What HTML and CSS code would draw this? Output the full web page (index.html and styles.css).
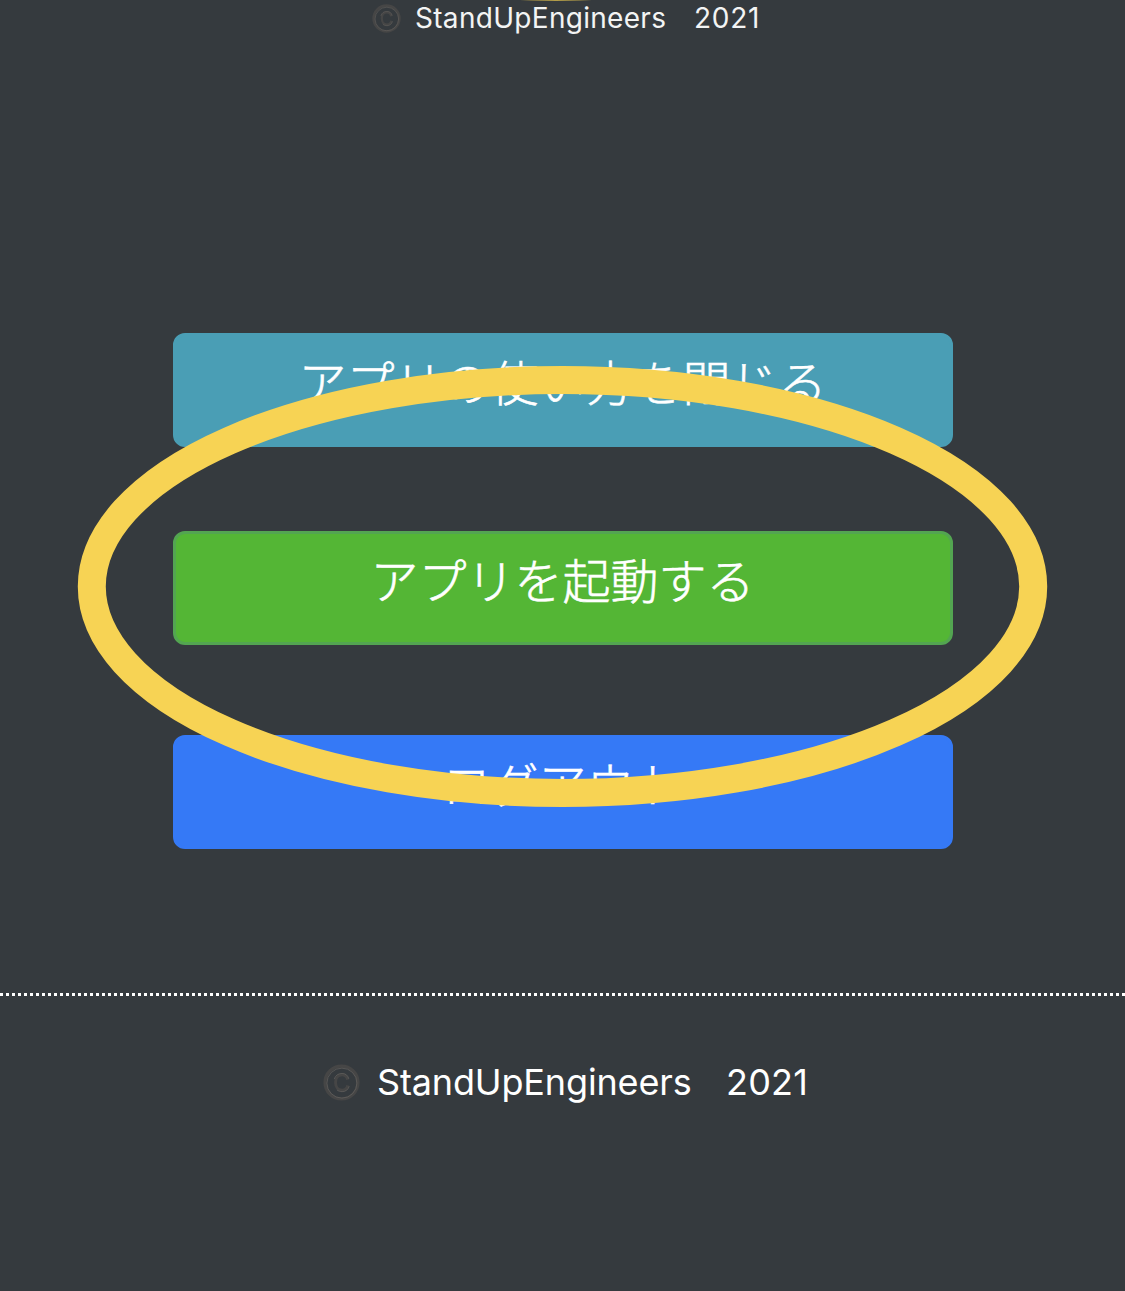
FILE: index.html
```html
<!DOCTYPE html>
<html lang="ja">
<head>
<meta charset="utf-8">
<title>StandUpEngineers</title>
<link rel="stylesheet" href="styles.css">
</head>
<body>
<div class="page">
  <div class="credit credit-small">
    <svg class="mark" viewBox="0 0 36 36" aria-hidden="true"><circle class="mark-disc" cx="18" cy="18" r="16"/><circle class="mark-edge" cx="18.4" cy="18.6" r="14.6"/><path class="mark-c" d="M24 15.2C23.2 12.2 21.2 10.5 18.6 10.5C14.8 10.5 12.2 13.4 12.2 18C12.2 22.6 14.8 25.5 18.6 25.5C21.4 25.5 23.4 23.8 24.1 20.8"/><path class="mark-edge" d="M25.1 14.4C24.2 11 21.8 9.2 18.6 9.2C14.7 9.2 11.9 11.2 11 14.7M25.5 21.6C24.5 25 22.1 26.9 18.6 26.9C16.5 26.9 14.9 26.3 13.5 25.2"/></svg>
    <span class="name">StandUpEngineers</span><span class="year">2021</span>
  </div>
  <main class="actions">
    <button class="btn btn-guide">アプリの使い方を閉じる</button>
    <button class="btn btn-launch">アプリを起動する</button>
    <button class="btn btn-logout">ログアウト</button>
  </main>
  <footer class="footer">
    <div class="credit">
      <svg class="mark" viewBox="0 0 36 36" aria-hidden="true"><circle class="mark-disc" cx="18" cy="18" r="16"/><circle class="mark-edge" cx="18.4" cy="18.6" r="14.6"/><path class="mark-c" d="M24 15.2C23.2 12.2 21.2 10.5 18.6 10.5C14.8 10.5 12.2 13.4 12.2 18C12.2 22.6 14.8 25.5 18.6 25.5C21.4 25.5 23.4 23.8 24.1 20.8"/><path class="mark-edge" d="M25.1 14.4C24.2 11 21.8 9.2 18.6 9.2C14.7 9.2 11.9 11.2 11 14.7M25.5 21.6C24.5 25 22.1 26.9 18.6 26.9C16.5 26.9 14.9 26.3 13.5 25.2"/></svg>
      <span class="name">StandUpEngineers</span><span class="year">2021</span>
    </div>
  </footer>
  <svg class="highlight" viewBox="0 0 1125 1291" aria-hidden="true">
    <ellipse class="ring" cx="562.5" cy="586.5" rx="470.7" ry="206.5"/>
    <ellipse class="ring-tip" cx="556" cy="-4" rx="60" ry="5"/>
  </svg>
</div>
</body>
</html>
```
FILE: styles.css
```css
* { box-sizing: border-box; }
body { margin: 0; background: #35393d; }
.page {
  position: relative;
  height: 1291px;
  overflow: hidden;
  background: #353a3e;
  color: #fff;
  font-family: "Inter", "Noto Sans CJK JP", sans-serif;
}
.credit {
  display: flex;
  align-items: center;
  height: 43px;
  padding-left: 323px;
  font-size: 36px;
  line-height: 43px;
  white-space: nowrap;
}
.mark { width: 37px; height: 37px; margin-right: 17px; fill: none; }
.mark-disc { stroke: #464646; stroke-width: 3.2; }
.mark-c { stroke: #464646; stroke-width: 2.8; }
.mark-edge { stroke: #65625f; stroke-width: .7; }
.name { width: 349px; letter-spacing: -.15px; }
.year { letter-spacing: .2px; }
.credit-small {
  height: 36px;
  padding-left: 372px;
  font-size: 28px;
  line-height: 35px;
  color: #f3f4f4;
}
.credit-small .mark { width: 29px; height: 29px; margin-right: 14px; }
.credit-small .name { width: 279px; letter-spacing: .3px; }
.credit-small .year { letter-spacing: .7px; }
.actions {
  display: flex;
  flex-direction: column;
  align-items: center;
  padding: 297px 0 144px 1px;
}
.btn {
  width: 780px;
  height: 114px;
  padding: 0 1px 21px 0;
  border: 3px solid transparent;
  border-radius: 12px;
  color: #fff;
  font: 300 48px/72px "Noto Sans CJK JP", sans-serif;
  -webkit-text-stroke: .6px #fff;
}
.btn-guide { background: #4a9eb5; border-color: #4a9eb5; margin-bottom: 84px; }
.btn-launch { background: #54b635; border-color: #53a551; margin-bottom: 90px; }
.btn-logout { background: #3579f6; border-color: #3579f6; }
.footer { padding-top: 68px; background: repeating-linear-gradient(90deg, #fff 0 3px, transparent 3px 6px) 0 0 / 100% 3px no-repeat; }
.highlight {
  position: absolute;
  inset: 0;
  width: 1125px;
  height: 1291px;
  pointer-events: none;
}
.ring { fill: none; stroke: #f7d354; stroke-width: 28; }
.ring-tip { fill: #b39d49; }
```
